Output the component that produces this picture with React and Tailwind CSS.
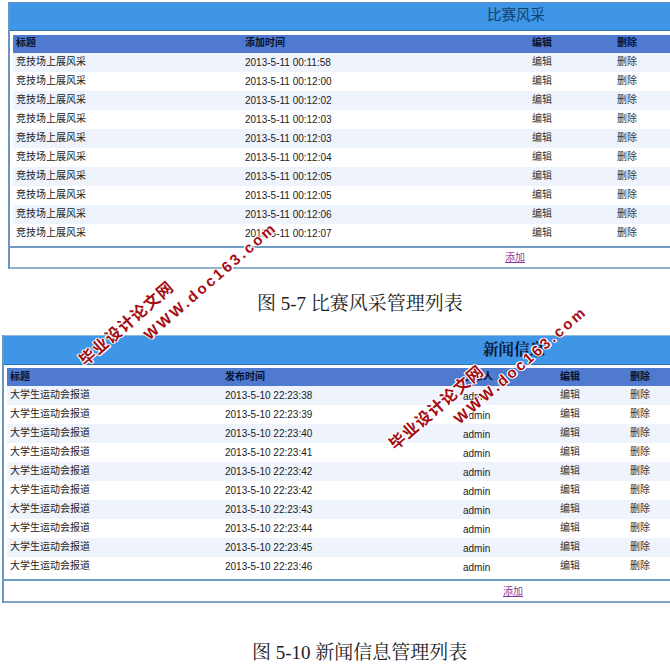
const sans = '"Liberation Sans","Noto Sans CJK SC",sans-serif';
const serif = '"Liberation Serif","Noto Serif CJK SC","Noto Sans CJK SC",serif';

function Table({ cols, head, rows, headLeading }) {
  return (
    <div className="text-[10px] leading-[19px] text-[#222]">
      <div className={`grid h-[18px] bg-[#4f7ad0] font-bold text-[#06122e] ${headLeading} ${cols}`}>
        {head.map((h, i) => (
          <div key={i} className="pl-[3px]">{h}</div>
        ))}
      </div>
      {rows.map((r, i) => (
        <div key={i} className={`grid h-[19px] ${cols} ${i % 2 === 0 ? "bg-[#eef3fc]" : "bg-white"}`}>
          {r.map((c, j) => (
            <div key={j} className={`pl-[3px] ${j === 0 ? "leading-[17px]" : c === "admin" ? "leading-[21px]" : /^\d/.test(c) ? "leading-[20px]" : "leading-[17px] text-[#333]"}`}>
              {c}
            </div>
          ))}
        </div>
      ))}
    </div>
  );
}

function Footer({ className }) {
  return (
    <div className={`text-[10px] ${className}`}>
      <a className="text-[#8a3a9e] underline" href="#">添加</a>
    </div>
  );
}

function Watermark({ className, text, spacing, size }) {
  return (
    <div
      className={`absolute origin-left rotate-[-41deg] whitespace-nowrap font-bold text-[#a40c12] leading-none [text-shadow:1px_0_0_#fff,-1px_0_0_#fff,0_1px_0_#fff,0_-1px_0_#fff,1px_1px_0_#fff,-1px_-1px_0_#fff] ${spacing} ${size} ${className}`}
    >
      {text}
    </div>
  );
}

const r1 = ["00:11:58","00:12:00","00:12:02","00:12:03","00:12:03","00:12:04","00:12:05","00:12:05","00:12:06","00:12:07"]
  .map((t) => ["竞技场上展风采", `2013-5-11 ${t}`, "编辑", "删除"]);
const r2 = ["38","39","40","41","42","42","43","44","45","46"]
  .map((t) => ["大学生运动会报道", `2013-5-10 22:23:${t}`, "admin", "编辑", "删除"]);

export default function App() {
  return (
    <div className="relative h-[672px] w-[670px] overflow-hidden bg-white" style={{ fontFamily: sans }}>
      <div className="ml-2 pt-[2px]">
        <div className="border-l-2 border-[#6a97bf]">
          <div className="h-[29px] border-y border-t-[#5b8fc0] border-b-[#2f76b4] bg-[#3f95e6] pl-[477px] text-[14.5px] leading-[25px] text-[#0f3f70]">
            比赛风采
          </div>
          <div className="pl-[3px] pt-[4px]">
            <Table cols="grid-cols-[229px_287px_85px_56px]" head={["标题", "添加时间", "编辑", "删除"]} rows={r1} headLeading="leading-[16px]" />
          </div>
          <div className="h-[3px]" />
          <Footer className="h-[23px] border-y-2 border-t-[#6f9bc0] border-b-[#8fb2d0] pl-[495px] leading-[20px]" />
        </div>
      </div>

      <div className="flex h-[66px] items-center pl-[257px] pt-[4px] text-[19px] text-[#222]" style={{ fontFamily: serif }}>
        图 5-7 比赛风采管理列表
      </div>

      <div className="ml-[2px]">
        <div className="border-l-2 border-[#6a97bf]">
          <div className="h-[30px] border-y border-t-[#8fb8dc] border-b-[#2f76b4] bg-[#3f95e6] pl-[479px] text-[15.5px] font-bold leading-[28px] text-[#0a1a3a]" style={{ fontFamily: serif }}>
            新闻信息
          </div>
          <div className="pl-[3px] pt-[3px]">
            <Table cols="grid-cols-[215px_238px_97px_70px_45px]" head={["标题", "发布时间", "  发布人", "编辑", "删除"]} rows={r2} headLeading="leading-[17px]" />
          </div>
          <div className="h-[3px]" />
          <Footer className="h-[24px] border-y-2 border-t-[#6f9bc0] border-b-[#7fa5c8] pl-[499px] leading-[22px]" />
        </div>
      </div>

      <div className="flex h-[98px] items-center pl-[252px] pt-[2px] text-[19px] text-[#222]" style={{ fontFamily: serif }}>
        图 5-10 新闻信息管理列表
      </div>

      <Watermark className="left-[82px] top-[355px]" text="毕业设计论文网" spacing="tracking-[1px]" size="text-[16px]" />
      <Watermark className="left-[146px] top-[329px]" text="WWW.doc163.com" spacing="tracking-[2.7px]" size="text-[15px]" />
      <Watermark className="left-[392px] top-[439px]" text="毕业设计论文网" spacing="tracking-[1px]" size="text-[16px]" />
      <Watermark className="left-[456px] top-[413px]" text="WWW.doc163.com" spacing="tracking-[2.7px]" size="text-[15px]" />
    </div>
  );
}
